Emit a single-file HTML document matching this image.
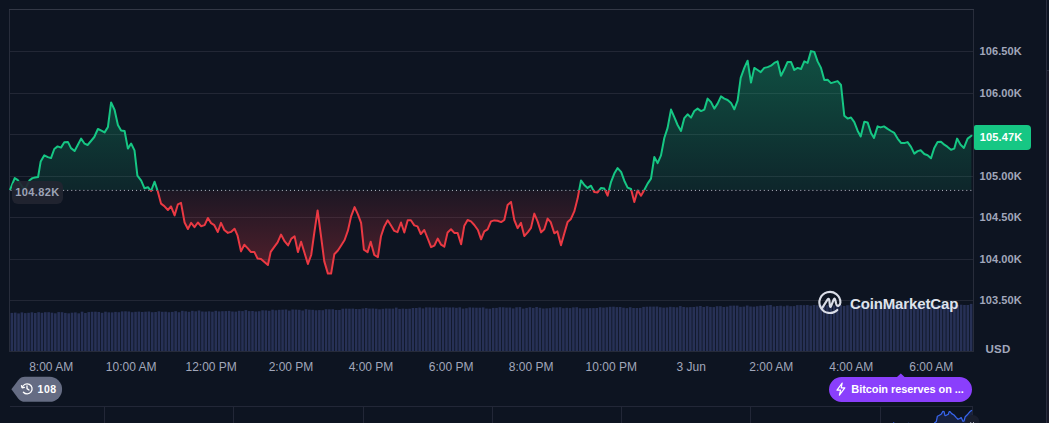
<!DOCTYPE html>
<html lang="en">
<head>
<meta charset="utf-8">
<title>Bitcoin price chart</title>
<style>
html,body{margin:0;padding:0;background:#0d1421;}
body{width:1049px;height:423px;position:relative;overflow:hidden;font-family:"Liberation Sans",sans-serif;}
#chart{position:absolute;left:0;top:0;}
.xl{position:absolute;top:360.4px;width:80px;text-align:center;font-size:12px;line-height:14px;color:#a1a7bb;white-space:nowrap;}
.yl{position:absolute;left:979.5px;font-size:11px;line-height:14px;font-weight:bold;color:#a1a7bb;white-space:nowrap;letter-spacing:0.1px;}
.cur{position:absolute;left:974px;top:124.5px;width:57px;height:25px;background:#16c784;border-radius:2px 4px 4px 2px;color:#fff;font-size:11px;font-weight:bold;line-height:25px;text-indent:5.7px;letter-spacing:0.15px;}
.open{position:absolute;left:12px;top:181px;width:51px;height:23px;background:rgba(34,37,49,0.92);border-radius:6px;color:#9da3b6;font-size:11px;font-weight:bold;line-height:23.5px;text-align:center;letter-spacing:0.4px;}
.usd{position:absolute;left:985.5px;top:341.5px;font-size:11.5px;line-height:14px;font-weight:bold;color:#a1a7bb;letter-spacing:0.2px;}
.wm{position:absolute;left:850px;top:294.8px;letter-spacing:-0.14px;font-size:15px;line-height:18px;font-weight:bold;color:#dfe3ec;white-space:nowrap;}
.hist{position:absolute;left:37.6px;top:382px;letter-spacing:0.45px;font-size:10.5px;line-height:14px;font-weight:bold;color:#fff;}
.news{position:absolute;left:851.3px;top:382px;letter-spacing:-0.08px;font-size:11px;line-height:14px;font-weight:bold;color:#fff;white-space:nowrap;}
</style>
</head>
<body>
<svg id="chart" width="1049" height="423" viewBox="0 0 1049 423">
<defs>
<linearGradient id="gg" x1="0" y1="50" x2="0" y2="190.3" gradientUnits="userSpaceOnUse">
<stop offset="0" stop-color="#16c784" stop-opacity="0.34"/>
<stop offset="1" stop-color="#16c784" stop-opacity="0.10"/>
</linearGradient>
<linearGradient id="rg" x1="0" y1="190.3" x2="0" y2="275" gradientUnits="userSpaceOnUse">
<stop offset="0" stop-color="#ea3943" stop-opacity="0.07"/>
<stop offset="1" stop-color="#ea3943" stop-opacity="0.32"/>
</linearGradient>
<clipPath id="up"><rect x="0" y="0" width="1049" height="190.3"/></clipPath>
<clipPath id="dn"><rect x="0" y="190.3" width="1049" height="240"/></clipPath>
</defs>
<!-- right panel edge -->
<rect x="1046" y="0" width="1" height="423" fill="#292d3e"/>
<rect x="1047" y="70" width="2" height="353" fill="#171927"/>
<rect x="1046" y="70" width="3" height="1" fill="#292d3e"/>
<!-- grid -->
<g stroke="#222735" stroke-width="1" shape-rendering="crispEdges"><line x1="10" x2="973" y1="51.5" y2="51.5"/><line x1="10" x2="973" y1="93.5" y2="93.5"/><line x1="10" x2="973" y1="134.5" y2="134.5"/><line x1="10" x2="973" y1="176.5" y2="176.5"/><line x1="10" x2="973" y1="217.5" y2="217.5"/><line x1="10" x2="973" y1="259.5" y2="259.5"/><line x1="10" x2="973" y1="300.5" y2="300.5"/></g>
<!-- volume -->
<g fill="#273156"><rect x="10.58" y="312.9" width="2.58" height="38.1"/><rect x="13.92" y="312.6" width="2.58" height="38.4"/><rect x="17.26" y="313.4" width="2.58" height="37.6"/><rect x="20.61" y="312.4" width="2.58" height="38.6"/><rect x="23.95" y="313.1" width="2.58" height="37.9"/><rect x="27.29" y="312.8" width="2.58" height="38.2"/><rect x="30.63" y="312.3" width="2.58" height="38.7"/><rect x="33.98" y="313.0" width="2.58" height="38.0"/><rect x="37.32" y="312.2" width="2.58" height="38.8"/><rect x="40.66" y="312.8" width="2.58" height="38.2"/><rect x="44.00" y="312.2" width="2.58" height="38.8"/><rect x="47.35" y="312.2" width="2.58" height="38.8"/><rect x="50.69" y="312.7" width="2.58" height="38.3"/><rect x="54.03" y="313.3" width="2.58" height="37.7"/><rect x="57.37" y="312.1" width="2.58" height="38.9"/><rect x="60.72" y="312.2" width="2.58" height="38.8"/><rect x="64.06" y="312.9" width="2.58" height="38.1"/><rect x="67.40" y="313.3" width="2.58" height="37.7"/><rect x="70.74" y="312.7" width="2.58" height="38.3"/><rect x="74.08" y="312.4" width="2.58" height="38.6"/><rect x="77.43" y="313.3" width="2.58" height="37.7"/><rect x="80.77" y="311.7" width="2.58" height="39.3"/><rect x="84.11" y="313.0" width="2.58" height="38.0"/><rect x="87.45" y="312.1" width="2.58" height="38.9"/><rect x="90.80" y="311.8" width="2.58" height="39.2"/><rect x="94.14" y="311.7" width="2.58" height="39.3"/><rect x="97.48" y="312.0" width="2.58" height="39.0"/><rect x="100.82" y="312.8" width="2.58" height="38.2"/><rect x="104.17" y="311.7" width="2.58" height="39.3"/><rect x="107.51" y="312.3" width="2.58" height="38.7"/><rect x="110.85" y="312.4" width="2.58" height="38.6"/><rect x="114.19" y="311.9" width="2.58" height="39.1"/><rect x="117.54" y="312.2" width="2.58" height="38.8"/><rect x="120.88" y="311.4" width="2.58" height="39.6"/><rect x="124.22" y="311.3" width="2.58" height="39.7"/><rect x="127.56" y="311.5" width="2.58" height="39.5"/><rect x="130.90" y="312.2" width="2.58" height="38.8"/><rect x="134.25" y="311.8" width="2.58" height="39.2"/><rect x="137.59" y="311.6" width="2.58" height="39.4"/><rect x="140.93" y="312.0" width="2.58" height="39.0"/><rect x="144.27" y="311.7" width="2.58" height="39.3"/><rect x="147.62" y="311.5" width="2.58" height="39.5"/><rect x="150.96" y="312.2" width="2.58" height="38.8"/><rect x="154.30" y="312.0" width="2.58" height="39.0"/><rect x="157.64" y="311.3" width="2.58" height="39.7"/><rect x="160.99" y="311.8" width="2.58" height="39.2"/><rect x="164.33" y="311.7" width="2.58" height="39.3"/><rect x="167.67" y="312.2" width="2.58" height="38.8"/><rect x="171.01" y="311.9" width="2.58" height="39.1"/><rect x="174.36" y="311.2" width="2.58" height="39.8"/><rect x="177.70" y="312.2" width="2.58" height="38.8"/><rect x="181.04" y="310.8" width="2.58" height="40.2"/><rect x="184.38" y="311.3" width="2.58" height="39.7"/><rect x="187.73" y="311.8" width="2.58" height="39.2"/><rect x="191.07" y="310.8" width="2.58" height="40.2"/><rect x="194.41" y="311.3" width="2.58" height="39.7"/><rect x="197.75" y="310.5" width="2.58" height="40.5"/><rect x="201.09" y="311.5" width="2.58" height="39.5"/><rect x="204.44" y="311.6" width="2.58" height="39.4"/><rect x="207.78" y="311.3" width="2.58" height="39.7"/><rect x="211.12" y="311.7" width="2.58" height="39.3"/><rect x="214.46" y="310.8" width="2.58" height="40.2"/><rect x="217.81" y="311.4" width="2.58" height="39.6"/><rect x="221.15" y="311.2" width="2.58" height="39.8"/><rect x="224.49" y="311.1" width="2.58" height="39.9"/><rect x="227.83" y="310.9" width="2.58" height="40.1"/><rect x="231.18" y="311.5" width="2.58" height="39.5"/><rect x="234.52" y="311.6" width="2.58" height="39.4"/><rect x="237.86" y="310.8" width="2.58" height="40.2"/><rect x="241.20" y="311.1" width="2.58" height="39.9"/><rect x="244.55" y="310.1" width="2.58" height="40.9"/><rect x="247.89" y="311.1" width="2.58" height="39.9"/><rect x="251.23" y="311.0" width="2.58" height="40.0"/><rect x="254.57" y="311.5" width="2.58" height="39.5"/><rect x="257.91" y="311.2" width="2.58" height="39.8"/><rect x="261.26" y="310.3" width="2.58" height="40.7"/><rect x="264.60" y="310.4" width="2.58" height="40.6"/><rect x="267.94" y="310.8" width="2.58" height="40.2"/><rect x="271.28" y="309.7" width="2.58" height="41.3"/><rect x="274.63" y="310.3" width="2.58" height="40.7"/><rect x="277.97" y="309.8" width="2.58" height="41.2"/><rect x="281.31" y="309.7" width="2.58" height="41.3"/><rect x="284.65" y="309.5" width="2.58" height="41.5"/><rect x="288.00" y="310.6" width="2.58" height="40.4"/><rect x="291.34" y="309.5" width="2.58" height="41.5"/><rect x="294.68" y="309.6" width="2.58" height="41.4"/><rect x="298.02" y="309.8" width="2.58" height="41.2"/><rect x="301.37" y="310.5" width="2.58" height="40.5"/><rect x="304.71" y="309.2" width="2.58" height="41.8"/><rect x="308.05" y="309.7" width="2.58" height="41.3"/><rect x="311.39" y="309.8" width="2.58" height="41.2"/><rect x="314.73" y="310.3" width="2.58" height="40.7"/><rect x="318.08" y="310.1" width="2.58" height="40.9"/><rect x="321.42" y="310.2" width="2.58" height="40.8"/><rect x="324.76" y="309.2" width="2.58" height="41.8"/><rect x="328.10" y="309.3" width="2.58" height="41.7"/><rect x="331.45" y="309.2" width="2.58" height="41.8"/><rect x="334.79" y="310.0" width="2.58" height="41.0"/><rect x="338.13" y="310.0" width="2.58" height="41.0"/><rect x="341.47" y="308.7" width="2.58" height="42.3"/><rect x="344.82" y="308.6" width="2.58" height="42.4"/><rect x="348.16" y="308.7" width="2.58" height="42.3"/><rect x="351.50" y="308.6" width="2.58" height="42.4"/><rect x="354.84" y="309.0" width="2.58" height="42.0"/><rect x="358.19" y="309.1" width="2.58" height="41.9"/><rect x="361.53" y="308.5" width="2.58" height="42.5"/><rect x="364.87" y="308.0" width="2.58" height="43.0"/><rect x="368.21" y="308.6" width="2.58" height="42.4"/><rect x="371.55" y="308.5" width="2.58" height="42.5"/><rect x="374.90" y="308.7" width="2.58" height="42.3"/><rect x="378.24" y="309.3" width="2.58" height="41.7"/><rect x="381.58" y="308.8" width="2.58" height="42.2"/><rect x="384.92" y="308.5" width="2.58" height="42.5"/><rect x="388.27" y="308.6" width="2.58" height="42.4"/><rect x="391.61" y="308.6" width="2.58" height="42.4"/><rect x="394.95" y="307.6" width="2.58" height="43.4"/><rect x="398.29" y="308.9" width="2.58" height="42.1"/><rect x="401.64" y="308.6" width="2.58" height="42.4"/><rect x="404.98" y="308.8" width="2.58" height="42.2"/><rect x="408.32" y="308.7" width="2.58" height="42.3"/><rect x="411.66" y="308.0" width="2.58" height="43.0"/><rect x="415.01" y="308.0" width="2.58" height="43.0"/><rect x="418.35" y="307.5" width="2.58" height="43.5"/><rect x="421.69" y="308.4" width="2.58" height="42.6"/><rect x="425.03" y="307.4" width="2.58" height="43.6"/><rect x="428.38" y="307.4" width="2.58" height="43.6"/><rect x="431.72" y="307.6" width="2.58" height="43.4"/><rect x="435.06" y="307.6" width="2.58" height="43.4"/><rect x="438.40" y="307.8" width="2.58" height="43.2"/><rect x="441.74" y="307.4" width="2.58" height="43.6"/><rect x="445.09" y="307.3" width="2.58" height="43.7"/><rect x="448.43" y="307.5" width="2.58" height="43.5"/><rect x="451.77" y="307.4" width="2.58" height="43.6"/><rect x="455.11" y="307.8" width="2.58" height="43.2"/><rect x="458.46" y="307.3" width="2.58" height="43.7"/><rect x="461.80" y="308.6" width="2.58" height="42.4"/><rect x="465.14" y="308.2" width="2.58" height="42.8"/><rect x="468.48" y="307.4" width="2.58" height="43.6"/><rect x="471.83" y="307.6" width="2.58" height="43.4"/><rect x="475.17" y="307.7" width="2.58" height="43.3"/><rect x="478.51" y="307.7" width="2.58" height="43.3"/><rect x="481.85" y="307.4" width="2.58" height="43.6"/><rect x="485.20" y="308.5" width="2.58" height="42.5"/><rect x="488.54" y="308.7" width="2.58" height="42.3"/><rect x="491.88" y="307.9" width="2.58" height="43.1"/><rect x="495.22" y="307.9" width="2.58" height="43.1"/><rect x="498.56" y="307.2" width="2.58" height="43.8"/><rect x="501.91" y="307.3" width="2.58" height="43.7"/><rect x="505.25" y="307.6" width="2.58" height="43.4"/><rect x="508.59" y="307.5" width="2.58" height="43.5"/><rect x="511.93" y="308.4" width="2.58" height="42.6"/><rect x="515.28" y="307.3" width="2.58" height="43.7"/><rect x="518.62" y="307.1" width="2.58" height="43.9"/><rect x="521.96" y="308.6" width="2.58" height="42.4"/><rect x="525.30" y="307.9" width="2.58" height="43.1"/><rect x="528.65" y="307.2" width="2.58" height="43.8"/><rect x="531.99" y="307.9" width="2.58" height="43.1"/><rect x="535.33" y="307.0" width="2.58" height="44.0"/><rect x="538.67" y="307.8" width="2.58" height="43.2"/><rect x="542.02" y="308.5" width="2.58" height="42.5"/><rect x="545.36" y="308.3" width="2.58" height="42.7"/><rect x="548.70" y="308.1" width="2.58" height="42.9"/><rect x="552.04" y="307.4" width="2.58" height="43.6"/><rect x="555.38" y="307.5" width="2.58" height="43.5"/><rect x="558.73" y="307.2" width="2.58" height="43.8"/><rect x="562.07" y="308.2" width="2.58" height="42.8"/><rect x="565.41" y="307.8" width="2.58" height="43.2"/><rect x="568.75" y="308.1" width="2.58" height="42.9"/><rect x="572.10" y="307.4" width="2.58" height="43.6"/><rect x="575.44" y="307.2" width="2.58" height="43.8"/><rect x="578.78" y="308.2" width="2.58" height="42.8"/><rect x="582.12" y="308.4" width="2.58" height="42.6"/><rect x="585.47" y="308.2" width="2.58" height="42.8"/><rect x="588.81" y="308.1" width="2.58" height="42.9"/><rect x="592.15" y="308.1" width="2.58" height="42.9"/><rect x="595.49" y="308.0" width="2.58" height="43.0"/><rect x="598.84" y="307.2" width="2.58" height="43.8"/><rect x="602.18" y="307.6" width="2.58" height="43.4"/><rect x="605.52" y="307.3" width="2.58" height="43.7"/><rect x="608.86" y="306.8" width="2.58" height="44.2"/><rect x="612.21" y="306.7" width="2.58" height="44.3"/><rect x="615.55" y="307.1" width="2.58" height="43.9"/><rect x="618.89" y="307.0" width="2.58" height="44.0"/><rect x="622.23" y="307.7" width="2.58" height="43.3"/><rect x="625.57" y="308.1" width="2.58" height="42.9"/><rect x="628.92" y="307.2" width="2.58" height="43.8"/><rect x="632.26" y="308.0" width="2.58" height="43.0"/><rect x="635.60" y="308.0" width="2.58" height="43.0"/><rect x="638.94" y="307.9" width="2.58" height="43.1"/><rect x="642.29" y="306.9" width="2.58" height="44.1"/><rect x="645.63" y="306.7" width="2.58" height="44.3"/><rect x="648.97" y="306.6" width="2.58" height="44.4"/><rect x="652.31" y="306.6" width="2.58" height="44.4"/><rect x="655.66" y="306.5" width="2.58" height="44.5"/><rect x="659.00" y="307.2" width="2.58" height="43.8"/><rect x="662.34" y="307.6" width="2.58" height="43.4"/><rect x="665.68" y="307.4" width="2.58" height="43.6"/><rect x="669.03" y="306.8" width="2.58" height="44.2"/><rect x="672.37" y="307.1" width="2.58" height="43.9"/><rect x="675.71" y="307.3" width="2.58" height="43.7"/><rect x="679.05" y="306.1" width="2.58" height="44.9"/><rect x="682.39" y="307.0" width="2.58" height="44.0"/><rect x="685.74" y="307.3" width="2.58" height="43.7"/><rect x="689.08" y="307.1" width="2.58" height="43.9"/><rect x="692.42" y="307.0" width="2.58" height="44.0"/><rect x="695.76" y="306.5" width="2.58" height="44.5"/><rect x="699.11" y="306.0" width="2.58" height="45.0"/><rect x="702.45" y="307.0" width="2.58" height="44.0"/><rect x="705.79" y="306.2" width="2.58" height="44.8"/><rect x="709.13" y="306.9" width="2.58" height="44.1"/><rect x="712.48" y="307.1" width="2.58" height="43.9"/><rect x="715.82" y="306.2" width="2.58" height="44.8"/><rect x="719.16" y="306.2" width="2.58" height="44.8"/><rect x="722.50" y="307.0" width="2.58" height="44.0"/><rect x="725.85" y="306.6" width="2.58" height="44.4"/><rect x="729.19" y="305.7" width="2.58" height="45.3"/><rect x="732.53" y="305.6" width="2.58" height="45.4"/><rect x="735.87" y="305.6" width="2.58" height="45.4"/><rect x="739.21" y="306.8" width="2.58" height="44.2"/><rect x="742.56" y="306.6" width="2.58" height="44.4"/><rect x="745.90" y="305.5" width="2.58" height="45.5"/><rect x="749.24" y="306.5" width="2.58" height="44.5"/><rect x="752.58" y="306.7" width="2.58" height="44.3"/><rect x="755.93" y="306.2" width="2.58" height="44.8"/><rect x="759.27" y="305.7" width="2.58" height="45.3"/><rect x="762.61" y="305.9" width="2.58" height="45.1"/><rect x="765.95" y="305.2" width="2.58" height="45.8"/><rect x="769.30" y="305.0" width="2.58" height="46.0"/><rect x="772.64" y="306.5" width="2.58" height="44.5"/><rect x="775.98" y="306.0" width="2.58" height="45.0"/><rect x="779.32" y="305.7" width="2.58" height="45.3"/><rect x="782.67" y="306.3" width="2.58" height="44.7"/><rect x="786.01" y="305.5" width="2.58" height="45.5"/><rect x="789.35" y="306.2" width="2.58" height="44.8"/><rect x="792.69" y="306.1" width="2.58" height="44.9"/><rect x="796.03" y="305.1" width="2.58" height="45.9"/><rect x="799.38" y="305.1" width="2.58" height="45.9"/><rect x="802.72" y="305.2" width="2.58" height="45.8"/><rect x="806.06" y="305.0" width="2.58" height="46.0"/><rect x="809.40" y="305.6" width="2.58" height="45.4"/><rect x="812.75" y="305.0" width="2.58" height="46.0"/><rect x="816.09" y="305.3" width="2.58" height="45.7"/><rect x="819.43" y="304.8" width="2.58" height="46.2"/><rect x="822.77" y="306.0" width="2.58" height="45.0"/><rect x="826.12" y="305.1" width="2.58" height="45.9"/><rect x="829.46" y="305.2" width="2.58" height="45.8"/><rect x="832.80" y="305.4" width="2.58" height="45.6"/><rect x="836.14" y="305.9" width="2.58" height="45.1"/><rect x="839.49" y="305.1" width="2.58" height="45.9"/><rect x="842.83" y="305.9" width="2.58" height="45.1"/><rect x="846.17" y="305.2" width="2.58" height="45.8"/><rect x="849.51" y="305.2" width="2.58" height="45.8"/><rect x="852.86" y="305.2" width="2.58" height="45.8"/><rect x="856.20" y="304.3" width="2.58" height="46.7"/><rect x="859.54" y="305.0" width="2.58" height="46.0"/><rect x="862.88" y="304.6" width="2.58" height="46.4"/><rect x="866.22" y="304.2" width="2.58" height="46.8"/><rect x="869.57" y="305.5" width="2.58" height="45.5"/><rect x="872.91" y="304.5" width="2.58" height="46.5"/><rect x="876.25" y="304.9" width="2.58" height="46.1"/><rect x="879.59" y="305.3" width="2.58" height="45.7"/><rect x="882.94" y="305.0" width="2.58" height="46.0"/><rect x="886.28" y="304.6" width="2.58" height="46.4"/><rect x="889.62" y="304.9" width="2.58" height="46.1"/><rect x="892.96" y="304.9" width="2.58" height="46.1"/><rect x="896.31" y="305.3" width="2.58" height="45.7"/><rect x="899.65" y="304.2" width="2.58" height="46.8"/><rect x="902.99" y="304.9" width="2.58" height="46.1"/><rect x="906.33" y="304.4" width="2.58" height="46.6"/><rect x="909.68" y="304.4" width="2.58" height="46.6"/><rect x="913.02" y="305.2" width="2.58" height="45.8"/><rect x="916.36" y="304.7" width="2.58" height="46.3"/><rect x="919.70" y="304.8" width="2.58" height="46.2"/><rect x="923.04" y="305.1" width="2.58" height="45.9"/><rect x="926.39" y="305.3" width="2.58" height="45.7"/><rect x="929.73" y="304.5" width="2.58" height="46.5"/><rect x="933.07" y="304.8" width="2.58" height="46.2"/><rect x="936.41" y="304.6" width="2.58" height="46.4"/><rect x="939.76" y="304.5" width="2.58" height="46.5"/><rect x="943.10" y="304.8" width="2.58" height="46.2"/><rect x="946.44" y="304.4" width="2.58" height="46.6"/><rect x="949.78" y="304.5" width="2.58" height="46.5"/><rect x="953.13" y="304.4" width="2.58" height="46.6"/><rect x="956.47" y="305.1" width="2.58" height="45.9"/><rect x="959.81" y="304.7" width="2.58" height="46.3"/><rect x="963.15" y="305.0" width="2.58" height="46.0"/><rect x="966.50" y="305.0" width="2.58" height="46.0"/><rect x="969.84" y="303.9" width="2.58" height="47.1"/></g>
<!-- frame -->
<g stroke-width="1" fill="none" shape-rendering="crispEdges">
<line x1="9.5" x2="9.5" y1="9" y2="352" stroke="#282d3b"/>
<line x1="973.5" x2="973.5" y1="9" y2="352" stroke="#282d3b"/>
<line x1="9" x2="974" y1="9.5" y2="9.5" stroke="#333846"/>
<line x1="9" x2="974" y1="351.5" y2="351.5" stroke="#262b3a"/>
</g>
<!-- areas -->
<polygon points="10.2,190.3 10.2,189.4 14.7,178.1 17.9,180.2 23.0,187.8 25.8,187.8 29.6,180.3 32.4,178.1 35.0,177.5 38.1,177.0 40.7,161.4 44.3,155.3 47.9,157.1 51.0,158.1 54.3,149.0 57.6,146.4 61.0,147.6 64.3,142.3 67.9,141.9 71.0,148.1 74.6,151.0 77.9,144.8 81.1,138.6 84.6,143.7 87.6,145.0 91.0,141.0 94.3,137.0 97.9,129.0 101.4,130.7 104.6,132.4 107.9,127.1 111.1,102.4 114.6,110.0 117.9,125.0 121.1,130.4 124.6,131.0 127.9,148.6 131.1,143.5 134.5,150.4 137.4,175.7 141.2,180.7 144.5,188.3 148.0,187.2 151.0,191.0 154.6,181.7 157.6,190.7 161.0,203.6 164.3,206.1 167.9,210.0 171.0,206.4 174.6,215.4 177.9,204.3 181.0,202.9 184.6,222.5 187.9,229.0 191.1,222.9 194.5,227.1 197.9,222.5 201.0,226.2 204.6,225.1 207.9,218.0 211.1,223.1 214.3,225.2 217.8,232.0 221.0,222.9 224.3,230.0 227.9,232.9 231.0,231.9 234.5,228.7 237.6,235.7 241.0,251.4 244.3,244.7 247.6,248.1 251.0,252.1 254.3,251.9 257.6,258.6 261.0,259.0 264.4,262.0 267.9,265.0 270.7,251.9 274.3,246.9 277.6,242.4 281.0,234.6 284.7,241.4 288.1,245.4 291.4,238.6 294.6,236.4 297.9,252.1 301.1,241.7 304.4,252.5 307.9,264.0 311.2,255.0 314.4,232.0 317.6,210.4 321.0,236.0 324.3,261.4 327.9,273.6 331.1,273.6 334.3,254.3 337.9,250.5 341.3,245.2 344.6,240.0 347.9,230.7 351.1,216.4 354.6,207.1 357.9,214.3 361.1,222.9 363.9,249.7 367.6,252.1 370.7,241.7 374.3,255.0 377.9,257.1 381.0,236.2 384.3,226.4 387.7,220.3 391.0,225.5 394.3,230.9 397.5,232.1 401.0,222.5 404.3,232.5 407.7,220.2 410.9,220.2 414.3,225.4 417.5,226.4 420.8,234.0 424.3,230.0 427.9,239.0 431.1,247.1 434.3,245.7 437.7,238.6 441.1,244.7 444.3,246.7 447.6,232.4 451.0,229.3 454.3,232.9 457.6,232.9 461.1,244.3 464.3,225.7 467.6,220.0 471.0,221.4 474.3,225.0 477.9,230.0 481.1,239.3 484.3,231.4 487.6,229.3 491.0,221.4 494.3,220.4 497.6,220.7 501.1,222.1 504.3,220.0 507.6,205.0 511.0,201.9 514.3,220.0 517.6,228.1 521.0,222.9 524.3,236.1 527.9,232.1 531.0,227.9 534.3,213.6 537.6,221.4 541.1,232.4 544.3,229.3 547.6,218.6 550.7,222.1 554.3,233.3 557.4,231.4 561.0,245.3 564.3,233.6 567.6,222.1 570.7,219.3 574.3,211.4 577.6,198.6 581.0,180.4 584.3,185.0 587.6,187.9 591.0,185.7 594.3,192.1 597.6,192.4 601.1,187.9 604.3,188.6 607.6,195.7 611.0,182.1 614.3,173.6 617.6,168.1 621.1,171.9 624.3,180.7 627.6,187.6 631.0,189.0 634.3,202.1 637.6,190.4 641.0,195.7 644.3,190.0 647.6,183.6 651.0,178.6 654.3,157.1 657.6,163.1 661.0,155.4 664.3,138.0 667.6,127.9 671.0,109.6 674.3,117.1 677.6,125.0 681.0,131.0 684.3,118.1 687.6,114.3 691.0,117.6 694.3,111.0 697.6,108.6 701.0,111.1 704.3,109.6 707.6,98.6 711.0,102.1 714.3,108.6 717.6,103.6 721.0,96.4 724.3,98.6 727.6,100.0 731.0,102.9 734.3,109.3 737.6,100.7 740.7,77.9 744.3,67.9 747.6,60.7 751.0,82.6 754.3,67.9 757.6,70.0 760.7,72.1 764.3,67.9 767.6,67.1 771.0,65.7 774.3,62.9 777.6,61.4 781.0,75.7 784.3,69.3 787.6,61.9 791.0,61.9 794.3,70.0 797.6,67.9 801.0,69.0 804.3,61.4 807.6,62.9 811.0,51.1 814.3,51.9 817.6,61.4 821.0,67.9 824.3,80.0 827.6,79.7 831.0,83.1 834.3,82.1 837.6,81.1 841.0,85.0 844.3,115.8 847.6,118.6 851.0,117.5 854.3,122.1 857.6,130.7 860.7,136.4 864.3,121.8 867.6,122.4 871.0,132.9 874.0,137.9 877.6,126.4 880.7,127.4 884.0,126.4 887.6,128.9 891.0,131.0 894.3,132.9 897.6,138.6 901.0,142.9 904.3,143.1 907.6,142.1 911.0,146.9 914.3,153.6 917.6,151.1 920.7,150.3 924.3,154.0 927.6,155.3 931.0,158.3 934.3,147.9 937.6,142.1 941.0,141.7 944.3,144.7 947.6,146.9 951.0,149.7 954.3,148.6 957.1,138.6 960.4,144.6 963.9,147.9 967.6,138.6 971.4,135.7 971.4,190.3" fill="url(#gg)" clip-path="url(#up)"/>
<polygon points="10.2,190.3 10.2,189.4 14.7,178.1 17.9,180.2 23.0,187.8 25.8,187.8 29.6,180.3 32.4,178.1 35.0,177.5 38.1,177.0 40.7,161.4 44.3,155.3 47.9,157.1 51.0,158.1 54.3,149.0 57.6,146.4 61.0,147.6 64.3,142.3 67.9,141.9 71.0,148.1 74.6,151.0 77.9,144.8 81.1,138.6 84.6,143.7 87.6,145.0 91.0,141.0 94.3,137.0 97.9,129.0 101.4,130.7 104.6,132.4 107.9,127.1 111.1,102.4 114.6,110.0 117.9,125.0 121.1,130.4 124.6,131.0 127.9,148.6 131.1,143.5 134.5,150.4 137.4,175.7 141.2,180.7 144.5,188.3 148.0,187.2 151.0,191.0 154.6,181.7 157.6,190.7 161.0,203.6 164.3,206.1 167.9,210.0 171.0,206.4 174.6,215.4 177.9,204.3 181.0,202.9 184.6,222.5 187.9,229.0 191.1,222.9 194.5,227.1 197.9,222.5 201.0,226.2 204.6,225.1 207.9,218.0 211.1,223.1 214.3,225.2 217.8,232.0 221.0,222.9 224.3,230.0 227.9,232.9 231.0,231.9 234.5,228.7 237.6,235.7 241.0,251.4 244.3,244.7 247.6,248.1 251.0,252.1 254.3,251.9 257.6,258.6 261.0,259.0 264.4,262.0 267.9,265.0 270.7,251.9 274.3,246.9 277.6,242.4 281.0,234.6 284.7,241.4 288.1,245.4 291.4,238.6 294.6,236.4 297.9,252.1 301.1,241.7 304.4,252.5 307.9,264.0 311.2,255.0 314.4,232.0 317.6,210.4 321.0,236.0 324.3,261.4 327.9,273.6 331.1,273.6 334.3,254.3 337.9,250.5 341.3,245.2 344.6,240.0 347.9,230.7 351.1,216.4 354.6,207.1 357.9,214.3 361.1,222.9 363.9,249.7 367.6,252.1 370.7,241.7 374.3,255.0 377.9,257.1 381.0,236.2 384.3,226.4 387.7,220.3 391.0,225.5 394.3,230.9 397.5,232.1 401.0,222.5 404.3,232.5 407.7,220.2 410.9,220.2 414.3,225.4 417.5,226.4 420.8,234.0 424.3,230.0 427.9,239.0 431.1,247.1 434.3,245.7 437.7,238.6 441.1,244.7 444.3,246.7 447.6,232.4 451.0,229.3 454.3,232.9 457.6,232.9 461.1,244.3 464.3,225.7 467.6,220.0 471.0,221.4 474.3,225.0 477.9,230.0 481.1,239.3 484.3,231.4 487.6,229.3 491.0,221.4 494.3,220.4 497.6,220.7 501.1,222.1 504.3,220.0 507.6,205.0 511.0,201.9 514.3,220.0 517.6,228.1 521.0,222.9 524.3,236.1 527.9,232.1 531.0,227.9 534.3,213.6 537.6,221.4 541.1,232.4 544.3,229.3 547.6,218.6 550.7,222.1 554.3,233.3 557.4,231.4 561.0,245.3 564.3,233.6 567.6,222.1 570.7,219.3 574.3,211.4 577.6,198.6 581.0,180.4 584.3,185.0 587.6,187.9 591.0,185.7 594.3,192.1 597.6,192.4 601.1,187.9 604.3,188.6 607.6,195.7 611.0,182.1 614.3,173.6 617.6,168.1 621.1,171.9 624.3,180.7 627.6,187.6 631.0,189.0 634.3,202.1 637.6,190.4 641.0,195.7 644.3,190.0 647.6,183.6 651.0,178.6 654.3,157.1 657.6,163.1 661.0,155.4 664.3,138.0 667.6,127.9 671.0,109.6 674.3,117.1 677.6,125.0 681.0,131.0 684.3,118.1 687.6,114.3 691.0,117.6 694.3,111.0 697.6,108.6 701.0,111.1 704.3,109.6 707.6,98.6 711.0,102.1 714.3,108.6 717.6,103.6 721.0,96.4 724.3,98.6 727.6,100.0 731.0,102.9 734.3,109.3 737.6,100.7 740.7,77.9 744.3,67.9 747.6,60.7 751.0,82.6 754.3,67.9 757.6,70.0 760.7,72.1 764.3,67.9 767.6,67.1 771.0,65.7 774.3,62.9 777.6,61.4 781.0,75.7 784.3,69.3 787.6,61.9 791.0,61.9 794.3,70.0 797.6,67.9 801.0,69.0 804.3,61.4 807.6,62.9 811.0,51.1 814.3,51.9 817.6,61.4 821.0,67.9 824.3,80.0 827.6,79.7 831.0,83.1 834.3,82.1 837.6,81.1 841.0,85.0 844.3,115.8 847.6,118.6 851.0,117.5 854.3,122.1 857.6,130.7 860.7,136.4 864.3,121.8 867.6,122.4 871.0,132.9 874.0,137.9 877.6,126.4 880.7,127.4 884.0,126.4 887.6,128.9 891.0,131.0 894.3,132.9 897.6,138.6 901.0,142.9 904.3,143.1 907.6,142.1 911.0,146.9 914.3,153.6 917.6,151.1 920.7,150.3 924.3,154.0 927.6,155.3 931.0,158.3 934.3,147.9 937.6,142.1 941.0,141.7 944.3,144.7 947.6,146.9 951.0,149.7 954.3,148.6 957.1,138.6 960.4,144.6 963.9,147.9 967.6,138.6 971.4,135.7 971.4,190.3" fill="url(#rg)" clip-path="url(#dn)"/>
<!-- baseline -->
<line x1="10.5" x2="973" y1="190.4" y2="190.4" stroke="#b9bdc9" stroke-width="1" stroke-dasharray="1 3.05"/>
<!-- lines -->
<polyline points="10.2,189.4 14.7,178.1 17.9,180.2 23.0,187.8 25.8,187.8 29.6,180.3 32.4,178.1 35.0,177.5 38.1,177.0 40.7,161.4 44.3,155.3 47.9,157.1 51.0,158.1 54.3,149.0 57.6,146.4 61.0,147.6 64.3,142.3 67.9,141.9 71.0,148.1 74.6,151.0 77.9,144.8 81.1,138.6 84.6,143.7 87.6,145.0 91.0,141.0 94.3,137.0 97.9,129.0 101.4,130.7 104.6,132.4 107.9,127.1 111.1,102.4 114.6,110.0 117.9,125.0 121.1,130.4 124.6,131.0 127.9,148.6 131.1,143.5 134.5,150.4 137.4,175.7 141.2,180.7 144.5,188.3 148.0,187.2 151.0,191.0 154.6,181.7 157.6,190.7 161.0,203.6 164.3,206.1 167.9,210.0 171.0,206.4 174.6,215.4 177.9,204.3 181.0,202.9 184.6,222.5 187.9,229.0 191.1,222.9 194.5,227.1 197.9,222.5 201.0,226.2 204.6,225.1 207.9,218.0 211.1,223.1 214.3,225.2 217.8,232.0 221.0,222.9 224.3,230.0 227.9,232.9 231.0,231.9 234.5,228.7 237.6,235.7 241.0,251.4 244.3,244.7 247.6,248.1 251.0,252.1 254.3,251.9 257.6,258.6 261.0,259.0 264.4,262.0 267.9,265.0 270.7,251.9 274.3,246.9 277.6,242.4 281.0,234.6 284.7,241.4 288.1,245.4 291.4,238.6 294.6,236.4 297.9,252.1 301.1,241.7 304.4,252.5 307.9,264.0 311.2,255.0 314.4,232.0 317.6,210.4 321.0,236.0 324.3,261.4 327.9,273.6 331.1,273.6 334.3,254.3 337.9,250.5 341.3,245.2 344.6,240.0 347.9,230.7 351.1,216.4 354.6,207.1 357.9,214.3 361.1,222.9 363.9,249.7 367.6,252.1 370.7,241.7 374.3,255.0 377.9,257.1 381.0,236.2 384.3,226.4 387.7,220.3 391.0,225.5 394.3,230.9 397.5,232.1 401.0,222.5 404.3,232.5 407.7,220.2 410.9,220.2 414.3,225.4 417.5,226.4 420.8,234.0 424.3,230.0 427.9,239.0 431.1,247.1 434.3,245.7 437.7,238.6 441.1,244.7 444.3,246.7 447.6,232.4 451.0,229.3 454.3,232.9 457.6,232.9 461.1,244.3 464.3,225.7 467.6,220.0 471.0,221.4 474.3,225.0 477.9,230.0 481.1,239.3 484.3,231.4 487.6,229.3 491.0,221.4 494.3,220.4 497.6,220.7 501.1,222.1 504.3,220.0 507.6,205.0 511.0,201.9 514.3,220.0 517.6,228.1 521.0,222.9 524.3,236.1 527.9,232.1 531.0,227.9 534.3,213.6 537.6,221.4 541.1,232.4 544.3,229.3 547.6,218.6 550.7,222.1 554.3,233.3 557.4,231.4 561.0,245.3 564.3,233.6 567.6,222.1 570.7,219.3 574.3,211.4 577.6,198.6 581.0,180.4 584.3,185.0 587.6,187.9 591.0,185.7 594.3,192.1 597.6,192.4 601.1,187.9 604.3,188.6 607.6,195.7 611.0,182.1 614.3,173.6 617.6,168.1 621.1,171.9 624.3,180.7 627.6,187.6 631.0,189.0 634.3,202.1 637.6,190.4 641.0,195.7 644.3,190.0 647.6,183.6 651.0,178.6 654.3,157.1 657.6,163.1 661.0,155.4 664.3,138.0 667.6,127.9 671.0,109.6 674.3,117.1 677.6,125.0 681.0,131.0 684.3,118.1 687.6,114.3 691.0,117.6 694.3,111.0 697.6,108.6 701.0,111.1 704.3,109.6 707.6,98.6 711.0,102.1 714.3,108.6 717.6,103.6 721.0,96.4 724.3,98.6 727.6,100.0 731.0,102.9 734.3,109.3 737.6,100.7 740.7,77.9 744.3,67.9 747.6,60.7 751.0,82.6 754.3,67.9 757.6,70.0 760.7,72.1 764.3,67.9 767.6,67.1 771.0,65.7 774.3,62.9 777.6,61.4 781.0,75.7 784.3,69.3 787.6,61.9 791.0,61.9 794.3,70.0 797.6,67.9 801.0,69.0 804.3,61.4 807.6,62.9 811.0,51.1 814.3,51.9 817.6,61.4 821.0,67.9 824.3,80.0 827.6,79.7 831.0,83.1 834.3,82.1 837.6,81.1 841.0,85.0 844.3,115.8 847.6,118.6 851.0,117.5 854.3,122.1 857.6,130.7 860.7,136.4 864.3,121.8 867.6,122.4 871.0,132.9 874.0,137.9 877.6,126.4 880.7,127.4 884.0,126.4 887.6,128.9 891.0,131.0 894.3,132.9 897.6,138.6 901.0,142.9 904.3,143.1 907.6,142.1 911.0,146.9 914.3,153.6 917.6,151.1 920.7,150.3 924.3,154.0 927.6,155.3 931.0,158.3 934.3,147.9 937.6,142.1 941.0,141.7 944.3,144.7 947.6,146.9 951.0,149.7 954.3,148.6 957.1,138.6 960.4,144.6 963.9,147.9 967.6,138.6 971.4,135.7" fill="none" stroke="#16c784" stroke-width="2" stroke-linejoin="round" stroke-linecap="round" clip-path="url(#up)"/>
<polyline points="10.2,189.4 14.7,178.1 17.9,180.2 23.0,187.8 25.8,187.8 29.6,180.3 32.4,178.1 35.0,177.5 38.1,177.0 40.7,161.4 44.3,155.3 47.9,157.1 51.0,158.1 54.3,149.0 57.6,146.4 61.0,147.6 64.3,142.3 67.9,141.9 71.0,148.1 74.6,151.0 77.9,144.8 81.1,138.6 84.6,143.7 87.6,145.0 91.0,141.0 94.3,137.0 97.9,129.0 101.4,130.7 104.6,132.4 107.9,127.1 111.1,102.4 114.6,110.0 117.9,125.0 121.1,130.4 124.6,131.0 127.9,148.6 131.1,143.5 134.5,150.4 137.4,175.7 141.2,180.7 144.5,188.3 148.0,187.2 151.0,191.0 154.6,181.7 157.6,190.7 161.0,203.6 164.3,206.1 167.9,210.0 171.0,206.4 174.6,215.4 177.9,204.3 181.0,202.9 184.6,222.5 187.9,229.0 191.1,222.9 194.5,227.1 197.9,222.5 201.0,226.2 204.6,225.1 207.9,218.0 211.1,223.1 214.3,225.2 217.8,232.0 221.0,222.9 224.3,230.0 227.9,232.9 231.0,231.9 234.5,228.7 237.6,235.7 241.0,251.4 244.3,244.7 247.6,248.1 251.0,252.1 254.3,251.9 257.6,258.6 261.0,259.0 264.4,262.0 267.9,265.0 270.7,251.9 274.3,246.9 277.6,242.4 281.0,234.6 284.7,241.4 288.1,245.4 291.4,238.6 294.6,236.4 297.9,252.1 301.1,241.7 304.4,252.5 307.9,264.0 311.2,255.0 314.4,232.0 317.6,210.4 321.0,236.0 324.3,261.4 327.9,273.6 331.1,273.6 334.3,254.3 337.9,250.5 341.3,245.2 344.6,240.0 347.9,230.7 351.1,216.4 354.6,207.1 357.9,214.3 361.1,222.9 363.9,249.7 367.6,252.1 370.7,241.7 374.3,255.0 377.9,257.1 381.0,236.2 384.3,226.4 387.7,220.3 391.0,225.5 394.3,230.9 397.5,232.1 401.0,222.5 404.3,232.5 407.7,220.2 410.9,220.2 414.3,225.4 417.5,226.4 420.8,234.0 424.3,230.0 427.9,239.0 431.1,247.1 434.3,245.7 437.7,238.6 441.1,244.7 444.3,246.7 447.6,232.4 451.0,229.3 454.3,232.9 457.6,232.9 461.1,244.3 464.3,225.7 467.6,220.0 471.0,221.4 474.3,225.0 477.9,230.0 481.1,239.3 484.3,231.4 487.6,229.3 491.0,221.4 494.3,220.4 497.6,220.7 501.1,222.1 504.3,220.0 507.6,205.0 511.0,201.9 514.3,220.0 517.6,228.1 521.0,222.9 524.3,236.1 527.9,232.1 531.0,227.9 534.3,213.6 537.6,221.4 541.1,232.4 544.3,229.3 547.6,218.6 550.7,222.1 554.3,233.3 557.4,231.4 561.0,245.3 564.3,233.6 567.6,222.1 570.7,219.3 574.3,211.4 577.6,198.6 581.0,180.4 584.3,185.0 587.6,187.9 591.0,185.7 594.3,192.1 597.6,192.4 601.1,187.9 604.3,188.6 607.6,195.7 611.0,182.1 614.3,173.6 617.6,168.1 621.1,171.9 624.3,180.7 627.6,187.6 631.0,189.0 634.3,202.1 637.6,190.4 641.0,195.7 644.3,190.0 647.6,183.6 651.0,178.6 654.3,157.1 657.6,163.1 661.0,155.4 664.3,138.0 667.6,127.9 671.0,109.6 674.3,117.1 677.6,125.0 681.0,131.0 684.3,118.1 687.6,114.3 691.0,117.6 694.3,111.0 697.6,108.6 701.0,111.1 704.3,109.6 707.6,98.6 711.0,102.1 714.3,108.6 717.6,103.6 721.0,96.4 724.3,98.6 727.6,100.0 731.0,102.9 734.3,109.3 737.6,100.7 740.7,77.9 744.3,67.9 747.6,60.7 751.0,82.6 754.3,67.9 757.6,70.0 760.7,72.1 764.3,67.9 767.6,67.1 771.0,65.7 774.3,62.9 777.6,61.4 781.0,75.7 784.3,69.3 787.6,61.9 791.0,61.9 794.3,70.0 797.6,67.9 801.0,69.0 804.3,61.4 807.6,62.9 811.0,51.1 814.3,51.9 817.6,61.4 821.0,67.9 824.3,80.0 827.6,79.7 831.0,83.1 834.3,82.1 837.6,81.1 841.0,85.0 844.3,115.8 847.6,118.6 851.0,117.5 854.3,122.1 857.6,130.7 860.7,136.4 864.3,121.8 867.6,122.4 871.0,132.9 874.0,137.9 877.6,126.4 880.7,127.4 884.0,126.4 887.6,128.9 891.0,131.0 894.3,132.9 897.6,138.6 901.0,142.9 904.3,143.1 907.6,142.1 911.0,146.9 914.3,153.6 917.6,151.1 920.7,150.3 924.3,154.0 927.6,155.3 931.0,158.3 934.3,147.9 937.6,142.1 941.0,141.7 944.3,144.7 947.6,146.9 951.0,149.7 954.3,148.6 957.1,138.6 960.4,144.6 963.9,147.9 967.6,138.6 971.4,135.7" fill="none" stroke="#ea3943" stroke-width="2" stroke-linejoin="round" stroke-linecap="butt" clip-path="url(#dn)"/>
<!-- watermark logo -->
<g fill="none" stroke="#dadde7" stroke-width="2.15" stroke-linecap="round" stroke-linejoin="round">
<path d="M821.6 308.9 L827.5 299.7 Q828.9 297.6 829.3 300.2 L829.9 305.8 Q830.3 308.2 831.3 305.6 L833.6 299.7 Q834.6 297.4 835.3 300 L836.1 303.6 Q836.9 306.8 838.7 305.6 Q840.4 304.4 840.4 302.5 A10.5 10.5 0 1 0 837.3 309.9"/>
</g>
<!-- navigator -->
<g stroke="#222737" stroke-width="1" shape-rendering="crispEdges">
<line x1="10" x2="973" y1="406.5" y2="406.5"/>
<line x1="104.5" x2="104.5" y1="406" y2="423"/><line x1="233.5" x2="233.5" y1="406" y2="423"/><line x1="363.5" x2="363.5" y1="406" y2="423"/><line x1="492.5" x2="492.5" y1="406" y2="423"/><line x1="621.5" x2="621.5" y1="406" y2="423"/><line x1="750.5" x2="750.5" y1="406" y2="423"/><line x1="880.5" x2="880.5" y1="406" y2="423"/>
<line x1="972.5" x2="972.5" y1="406" y2="423"/>
</g>
<polygon points="934.3,423 936.3,421.6 937.4,416.2 939.4,415.3 941.4,413.9 942.9,411.3 944,411.5 945,415.6 946.3,415.3 948.3,414.2 949.2,411.6 950,411.7 951.7,413.6 954,415 956.3,417.6 958,419.3 959.7,418.5 961.2,417.6 962.9,421.3 964,421 965.2,416.7 967.8,414.2 970,411.6 972,410.2 972,423" fill="#17213f"/>
<polyline points="934.3,423 936.3,421.6 937.4,416.2 939.4,415.3 941.4,413.9 942.9,411.3 944,411.5 945,415.6 946.3,415.3 948.3,414.2 949.2,411.6 950,411.7 951.7,413.6 954,415 956.3,417.6 958,419.3 959.7,418.5 961.2,417.6 962.9,421.3 964,421 965.2,416.7 967.8,414.2 970,411.6 972,410.2" fill="none" stroke="#3865ee" stroke-width="1.25" stroke-linejoin="round"/>
<polygon points="892.4,423.5 893.7,422 895,423.5" fill="#3865ee"/><polygon points="907.8,423.5 908.5,422.5 909.2,423.5" fill="#3865ee"/>
<circle cx="972.6" cy="421.9" r="6.9" fill="#191e2d"/>
<rect x="970.2" y="422" width="1" height="1" fill="#9ea3b3"/><rect x="973" y="422" width="1" height="1" fill="#9ea3b3"/>
<!-- history badge -->
<path d="M11.4 389.3 L18.2 380.2 Q20.8 376.8 25 376.8 L49.6 376.8 A12.5 12.5 0 0 1 49.6 401.8 L25 401.8 Q20.8 401.8 18.2 398.4 Z" fill="#656c83"/>
<g fill="none" stroke="#fff" stroke-width="1.3" stroke-linecap="round" stroke-linejoin="round">
<path d="M22.3 387.4 A5 5 0 1 1 23.4 392.2"/>
<path d="M21.5 385.7 L22.2 387.9 L24.4 387.4"/>
<path d="M27 385.8 L27 388.6 L29 390"/>
</g>
<!-- news pill -->
<path d="M841.5 377 L897 377 L900.2 373.9 Q900.8 373.3 901.4 373.9 L904.6 377 L959.5 377 A12.5 12.5 0 0 1 959.5 402 L841.5 402 A12.5 12.5 0 0 1 841.5 377 Z" fill="#8a3ffc"/>
<path d="M842.2 383 L837 390.2 L840.6 390.2 L839.4 395.2 L844.8 387.8 L841.2 387.8 Z" fill="none" stroke="#fff" stroke-width="1.2" stroke-linejoin="round"/>
</svg>
<div class="xl" style="left:11.2px">8:00 AM</div><div class="xl" style="left:91.2px">10:00 AM</div><div class="xl" style="left:171.2px">12:00 PM</div><div class="xl" style="left:251.0px">2:00 PM</div><div class="xl" style="left:331.0px">4:00 PM</div><div class="xl" style="left:411.2px">6:00 PM</div><div class="xl" style="left:491.2px">8:00 PM</div><div class="xl" style="left:571.3px">10:00 PM</div><div class="xl" style="left:651.3px">3 Jun</div><div class="xl" style="left:731.3px">2:00 AM</div><div class="xl" style="left:811.3px">4:00 AM</div><div class="xl" style="left:891.3px">6:00 AM</div>
<div class="yl" style="top:44.0px">106.50K</div><div class="yl" style="top:86.0px">106.00K</div><div class="yl" style="top:169.0px">105.00K</div><div class="yl" style="top:210.0px">104.50K</div><div class="yl" style="top:252.0px">104.00K</div><div class="yl" style="top:293.0px">103.50K</div>
<div class="cur">105.47K</div>
<div class="open">104.82K</div>
<div class="usd">USD</div>
<div class="wm">CoinMarketCap</div>
<div class="hist">108</div>
<div class="news">Bitcoin reserves on ...</div>
</body>
</html>
